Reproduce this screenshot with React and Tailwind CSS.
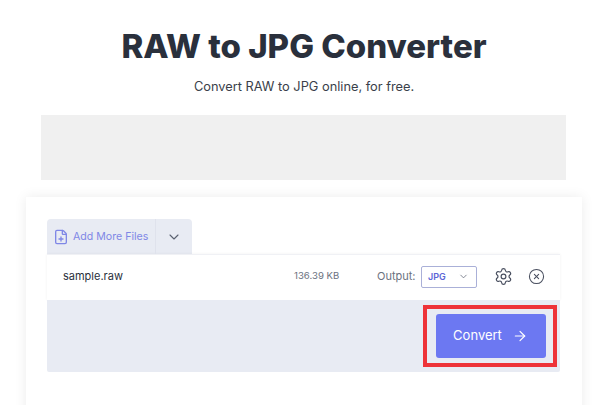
import React from 'react';
import { ChevronDown, FilePlus, Settings, CircleX, ArrowRight } from 'lucide-react';

const App = () => {
  return (
    <div className="h-[405px] w-[600px] overflow-hidden bg-white font-['Inter',sans-serif]">
      <header className="pl-[8px] pt-[27px] text-center">
        <h1 className="text-[33px] font-extrabold leading-[38px] tracking-[0px] text-[#2a303c]">RAW to JPG Converter</h1>
        <p className="mt-[12px] text-[12.8px] leading-[20px] text-[#3a3f4a]">Convert RAW to JPG online, for free.</p>
      </header>

      <div className="mx-[41px] mt-[18px] h-[65px] w-[525px] bg-[#f0f0f0]"></div>

      <div className="ml-[26px] mt-[17px] h-[300px] w-[556px] bg-white px-[21px] pt-[22px] shadow-[0_0_12px_rgba(0,0,0,0.08)]">
        <div className="flex h-[35px] w-[145px] items-center rounded-t-[4px] bg-[#e8ebf3]">
          <div className="flex h-full w-[109px] items-center gap-[4px] border-r border-[#dfe2ec] pl-[6px] text-[#7f87e6]">
            <FilePlus size={16} strokeWidth={2} />
            <span className="text-[10.6px] font-normal">Add More Files</span>
          </div>
          <div className="flex flex-1 justify-center text-[#5a6070]">
            <ChevronDown size={16} strokeWidth={1.6} />
          </div>
        </div>

        <div className="flex h-[46px] w-[513px] items-center border-t border-[#f0f1f5] bg-white pb-[2px] pl-[16px] shadow-[0_0_3px_rgba(0,0,0,0.06)]">
          <span className="w-[231px] text-[11px] text-[#2a303c]">sample.raw</span>
          <span className="w-[83px] text-[9.6px] text-[#6b7280]">136.39 KB</span>
          <span className="w-[44px] text-[11px] text-[#6b7280]">Output:</span>
          <div className="flex h-[22px] w-[56px] items-center justify-between rounded-[2px] border border-[#aab0d8] pl-[6px] pr-[7px] text-[#5c66d6]">
            <span className="text-[9px] font-semibold">JPG</span>
            <ChevronDown size={11} strokeWidth={1.6} className="text-[#5a6070]" />
          </div>
          <Settings size={19} strokeWidth={1.5} className="ml-[17px] text-[#4a5060]" />
          <CircleX size={17} strokeWidth={1.5} className="ml-[15px] text-[#4a5060]" />
        </div>

        <div className="flex h-[72px] w-[513px] justify-end rounded-b-[2px] bg-[#e8ebf3] pr-[3px] pt-[5px]">
          <div className="h-[62px] w-[134px] border-[4px] border-[#ee3338] pl-[9px] pt-[5px]">
            <button className="flex h-[44px] w-[110px] items-center justify-center gap-[10px] rounded-[3px] bg-[#6c78f2] pr-[1px] text-[13px] text-white">
              Convert
              <ArrowRight size={16} strokeWidth={1.8} />
            </button>
          </div>
        </div>
      </div>
    </div>
  );
};

export default App;
